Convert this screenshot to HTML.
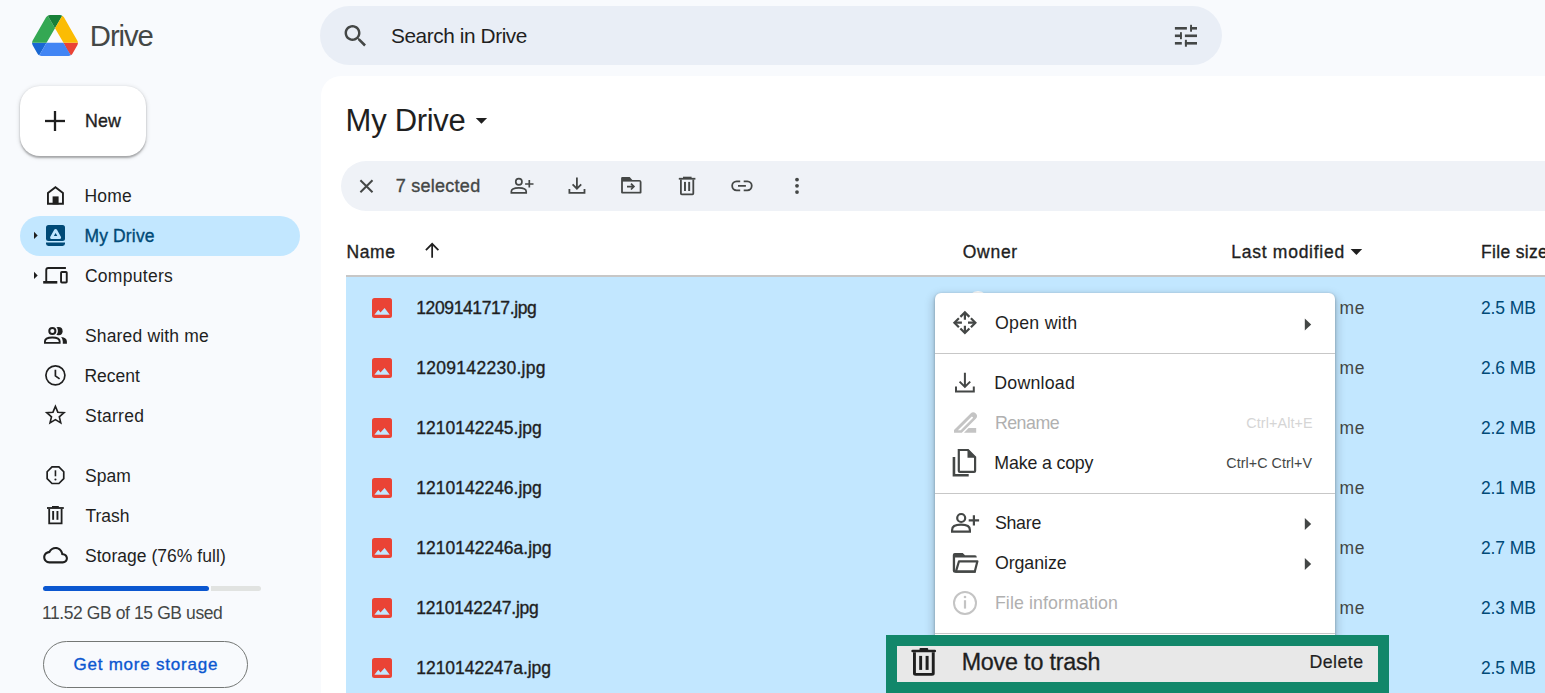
<!DOCTYPE html>
<html><head><meta charset="utf-8">
<style>
*{box-sizing:border-box;margin:0;padding:0}
html,body{width:1545px;height:693px;overflow:hidden;background:#f8fafd;font-family:"Liberation Sans",sans-serif;color:#1f1f1f}
.a{position:absolute}
.t{position:absolute;white-space:nowrap;line-height:1}
svg{position:absolute;left:0;top:0;overflow:visible}
</style></head><body>
<svg style="left:32px;top:15px" width="46" height="41" viewBox="0 0 87.3 78">
<path d="m6.6 66.85 3.85 6.65c.8 1.4 1.95 2.5 3.3 3.3l13.75-23.8h-27.5c0 1.55.4 3.1 1.2 4.5z" fill="#1967d2"/>
<path d="m43.65 25-13.75-23.8c-1.35.8-2.5 1.9-3.3 3.3l-25.4 44a9.06 9.06 0 0 0 -1.2 4.5h27.5z" fill="#34a853"/>
<path d="m73.55 76.8c1.35-.8 2.5-1.9 3.3-3.3l1.6-2.75 7.65-13.25c.8-1.4 1.2-2.95 1.2-4.5h-27.502l5.852 11.5z" fill="#ea4335"/>
<path d="m43.650 25 13.75-23.8c-1.35-.8-2.9-1.2-4.5-1.2h-18.5c-1.6 0-3.15.45-4.5 1.2z" fill="#188038"/>
<path d="m59.8 53h-32.3l-13.75 23.8c1.35.8 2.9 1.2 4.5 1.2h50.8c1.6 0 3.15-.45 4.5-1.2z" fill="#4285f4"/>
<path d="m73.4 26.5-12.7-22c-.8-1.4-1.95-2.5-3.3-3.3l-13.75 23.8 16.15 28h27.45c0-1.55-.4-3.1-1.2-4.5z" fill="#fbbc04"/>
</svg>
<div class="t" style="left:89.86px;top:21.30px;font-size:29.30px;color:#444746;letter-spacing:-1.102px;">Drive</div>
<div class="a" style="left:320px;top:6px;width:902px;height:59px;border-radius:29.5px;background:#e9eef6"></div>
<div class="t" style="left:390.96px;top:25.79px;font-size:20.80px;color:#1f1f1f;letter-spacing:-0.407px;">Search in Drive</div>
<div class="a" style="left:321px;top:76px;width:1300px;height:700px;border-radius:20px 0 0 0;background:#fff"></div>
<div class="a" style="left:20px;top:86px;width:126px;height:70px;border-radius:20px;background:#fff;box-shadow:0 1.5px 2px rgba(0,0,0,.28),0 1px 4px 1px rgba(0,0,0,.1)"></div>
<div class="t" style="left:85.08px;top:113.03px;font-size:17.80px;color:#1f1f1f;-webkit-text-stroke:0.35px #1f1f1f;letter-spacing:0.117px;">New</div>
<div class="a" style="left:20px;top:216px;width:280px;height:40px;border-radius:20px;background:#c2e7ff"></div>
<div class="t" style="left:84.40px;top:187.84px;font-size:17.50px;color:#1f1f1f;letter-spacing:0.250px;">Home</div>
<div class="t" style="left:84.40px;top:227.99px;font-size:17.50px;color:#004a77;-webkit-text-stroke:0.35px #004a77;letter-spacing:0.164px;">My Drive</div>
<div class="t" style="left:84.92px;top:267.79px;font-size:17.50px;color:#1f1f1f;letter-spacing:0.289px;">Computers</div>
<div class="t" style="left:85.01px;top:327.79px;font-size:17.50px;color:#1f1f1f;letter-spacing:0.157px;">Shared with me</div>
<div class="t" style="left:84.40px;top:367.79px;font-size:17.50px;color:#1f1f1f;letter-spacing:0.020px;">Recent</div>
<div class="t" style="left:85.01px;top:407.79px;font-size:17.50px;color:#1f1f1f;letter-spacing:0.254px;">Starred</div>
<div class="t" style="left:85.01px;top:467.79px;font-size:17.50px;color:#1f1f1f;">Spam</div>
<div class="t" style="left:85.45px;top:507.79px;font-size:17.50px;color:#1f1f1f;">Trash</div>
<div class="t" style="left:85.01px;top:547.99px;font-size:17.50px;color:#1f1f1f;letter-spacing:0.038px;">Storage (76% full)</div>
<div class="a" style="left:210.6px;top:586px;width:50.4px;height:5px;border-radius:0 3px 3px 0;background:#e1e3e1"></div>
<div class="a" style="left:43px;top:586px;width:166px;height:5px;border-radius:3px;background:#0b57d0"></div>
<div class="t" style="left:41.89px;top:604.99px;font-size:17.50px;color:#444746;letter-spacing:-0.400px;">11.52 GB of 15 GB used</div>
<div class="a" style="left:43px;top:641px;width:205px;height:47px;border-radius:24px;border:1px solid #747775"></div>
<div class="t" style="left:73.45px;top:655.91px;font-size:17.00px;color:#0b57d0;-webkit-text-stroke:0.35px #0b57d0;letter-spacing:0.777px;">Get more storage</div>
<div class="t" style="left:345.62px;top:105.46px;font-size:31.00px;color:#1f1f1f;letter-spacing:-0.303px;">My Drive</div>
<div class="a" style="left:341px;top:161px;width:1300px;height:50px;border-radius:25px;background:#eff2f7"></div>
<div class="t" style="left:395.70px;top:176.86px;font-size:18.00px;color:#444746;-webkit-text-stroke:0.35px #444746;letter-spacing:0.266px;">7 selected</div>
<div class="t" style="left:346.40px;top:243.89px;font-size:17.50px;color:#1f1f1f;-webkit-text-stroke:0.35px #1f1f1f;letter-spacing:0.617px;">Name</div>
<div class="t" style="left:962.81px;top:243.89px;font-size:17.50px;color:#1f1f1f;-webkit-text-stroke:0.35px #1f1f1f;letter-spacing:0.700px;">Owner</div>
<div class="t" style="left:1231.20px;top:243.89px;font-size:17.50px;color:#1f1f1f;-webkit-text-stroke:0.35px #1f1f1f;letter-spacing:0.742px;">Last modified</div>
<div class="t" style="left:1481.10px;top:243.89px;font-size:17.50px;color:#1f1f1f;-webkit-text-stroke:0.35px #1f1f1f;letter-spacing:0.300px;">File size</div>
<div class="a" style="left:346px;top:275px;width:1300px;height:2px;background:#c7c7c7"></div>
<div class="a" style="left:346px;top:277px;width:1300px;height:420px;background:#c2e7ff"></div>
<div class="t" style="left:416.29px;top:299.79px;font-size:17.50px;color:#1f1f1f;-webkit-text-stroke:0.35px #1f1f1f;letter-spacing:-0.393px;">1209141717.jpg</div>
<div class="t" style="left:1339.56px;top:299.79px;font-size:17.50px;color:#444746;letter-spacing:0.700px;">me</div>
<div class="t" style="left:1480.92px;top:299.79px;font-size:17.50px;color:#004a77;letter-spacing:-0.087px;">2.5 MB</div>
<div class="t" style="left:416.29px;top:359.79px;font-size:17.50px;color:#1f1f1f;-webkit-text-stroke:0.35px #1f1f1f;letter-spacing:0.284px;">1209142230.jpg</div>
<div class="t" style="left:1339.56px;top:359.79px;font-size:17.50px;color:#444746;letter-spacing:0.700px;">me</div>
<div class="t" style="left:1480.92px;top:359.79px;font-size:17.50px;color:#004a77;letter-spacing:-0.087px;">2.6 MB</div>
<div class="t" style="left:416.29px;top:419.79px;font-size:17.50px;color:#1f1f1f;-webkit-text-stroke:0.35px #1f1f1f;letter-spacing:-0.001px;">1210142245.jpg</div>
<div class="t" style="left:1339.56px;top:419.79px;font-size:17.50px;color:#444746;letter-spacing:0.700px;">me</div>
<div class="t" style="left:1480.92px;top:419.79px;font-size:17.50px;color:#004a77;letter-spacing:-0.087px;">2.2 MB</div>
<div class="t" style="left:416.29px;top:479.79px;font-size:17.50px;color:#1f1f1f;-webkit-text-stroke:0.35px #1f1f1f;letter-spacing:-0.001px;">1210142246.jpg</div>
<div class="t" style="left:1339.56px;top:479.79px;font-size:17.50px;color:#444746;letter-spacing:0.700px;">me</div>
<div class="t" style="left:1480.92px;top:479.79px;font-size:17.50px;color:#004a77;letter-spacing:-0.087px;">2.1 MB</div>
<div class="t" style="left:416.29px;top:539.79px;font-size:17.50px;color:#1f1f1f;-webkit-text-stroke:0.35px #1f1f1f;letter-spacing:-0.002px;">1210142246a.jpg</div>
<div class="t" style="left:1339.56px;top:539.79px;font-size:17.50px;color:#444746;letter-spacing:0.700px;">me</div>
<div class="t" style="left:1480.92px;top:539.79px;font-size:17.50px;color:#004a77;letter-spacing:-0.087px;">2.7 MB</div>
<div class="t" style="left:416.29px;top:599.79px;font-size:17.50px;color:#1f1f1f;-webkit-text-stroke:0.35px #1f1f1f;letter-spacing:-0.232px;">1210142247.jpg</div>
<div class="t" style="left:1339.56px;top:599.79px;font-size:17.50px;color:#444746;letter-spacing:0.700px;">me</div>
<div class="t" style="left:1480.92px;top:599.79px;font-size:17.50px;color:#004a77;letter-spacing:-0.087px;">2.3 MB</div>
<div class="t" style="left:416.29px;top:659.79px;font-size:17.50px;color:#1f1f1f;-webkit-text-stroke:0.35px #1f1f1f;letter-spacing:-0.037px;">1210142247a.jpg</div>
<div class="t" style="left:1339.56px;top:659.79px;font-size:17.50px;color:#444746;letter-spacing:0.700px;">me</div>
<div class="t" style="left:1480.92px;top:659.79px;font-size:17.50px;color:#004a77;letter-spacing:-0.087px;">2.5 MB</div>
<svg width="1545" height="693" viewBox="0 0 1545 693" fill="none" stroke-linecap="butt"><g transform="translate(340.9,21.3) scale(1.224)" fill="#444746"><path d="M15.5 14h-.79l-.28-.27C15.41 12.59 16 11.11 16 9.5 16 5.91 13.09 3 9.5 3S3 5.910 3 9.5 5.91 16 9.5 16c1.61 0 3.09-.59 4.23-1.57l.27.28v.79l5 4.99L20.49 19l-4.99-5zm-6 0C7.01 14 5 11.99 5 9.5S7.01 5 9.5 5 14 7.01 14 9.5 11.99 14 9.5 14z"/></g><rect x="1174.9" y="27" width="12" height="2.6" fill="#444746"/><rect x="1190.1" y="27" width="6.9" height="2.6" fill="#444746"/><rect x="1190.1" y="24.8" width="1.9" height="6.9" fill="#444746"/><rect x="1174.9" y="34.5" width="6.8" height="2.6" fill="#444746"/><rect x="1180" y="32.2" width="1.9" height="7" fill="#444746"/><rect x="1184.9" y="34.5" width="12.1" height="2.6" fill="#444746"/><rect x="1174.9" y="42" width="6.9" height="2.6" fill="#444746"/><rect x="1184.9" y="39.8" width="2" height="6.9" fill="#444746"/><rect x="1184.9" y="42" width="12.1" height="2.6" fill="#444746"/><rect x="45" y="119.85" width="20" height="2.3" fill="#1f1f1f"/><rect x="53.85" y="111" width="2.3" height="20" fill="#1f1f1f"/><path d="M47.95 203.75V192.9L55.45 187.2L62.95 192.9V203.75Z" fill="none" stroke="#1f1f1f" stroke-width="1.9" /><rect x="52.6" y="196.4" width="6" height="8" fill="#1f1f1f"/><rect x="46" y="225" width="19" height="16" rx="2.5" fill="#004a77"/><path d="M46 242.6H65V243.6Q65 246 62.6 246H48.4Q46 246 46 243.6Z" fill="#004a77" /><path d="M55.6 230.6L51.7 237.5H59.5Z" fill="#c2e7ff" stroke="#c2e7ff" stroke-width="3.2" stroke-linejoin="round"/><path d="M55.6 233L53.9 235.9H57.3Z" fill="#004a77" /><path d="M34 231.8L37.7 235.4L34 239Z" fill="#1f1f1f"/><path d="M34 271.8L37.7 275.4L34 279Z" fill="#1f1f1f"/><path d="M46.25 281V270Q46.25 267.95 48.3 267.95H65.9" fill="none" stroke="#1f1f1f" stroke-width="1.9" /><rect x="43.2" y="281" width="14.1" height="2.6" fill="#1f1f1f"/><rect x="61.05" y="272.05" width="5.7" height="10.5" rx="0.8" fill="none" stroke="#1f1f1f" stroke-width="1.9"/><circle cx="52.35" cy="331.05" r="3.05" fill="none" stroke="#1f1f1f" stroke-width="2"/><path d="M44.95 342.85V341.3Q44.95 337.45 52.3 337.45Q59.65 337.45 59.65 341.3V342.85Z" fill="none" stroke="#1f1f1f" stroke-width="1.9" /><defs><mask id="cr"><rect x="40" y="320" width="40" height="30" fill="#fff"/><circle cx="52.35" cy="331.05" r="5.6" fill="#000"/></mask></defs><circle cx="58.5" cy="331.15" r="4.1" fill="#1f1f1f" mask="url(#cr)"/><path d="M61.2 337.1Q66.9 337.9 66.9 341.6V343.8H62.8V341.6Q62.8 339.3 61.2 337.1Z" fill="#1f1f1f" /><circle cx="55.4" cy="375.35" r="9.5" fill="none" stroke="#1f1f1f" stroke-width="1.7"/><path d="M55.4 369.8V375.9L59.6 378.9" fill="none" stroke="#1f1f1f" stroke-width="1.7" /><polygon points="55.40,406.40 57.81,412.18 64.05,412.69 59.30,416.77 60.75,422.86 55.40,419.60 50.05,422.86 51.50,416.77 46.75,412.69 52.99,412.18" fill="none" stroke="#1f1f1f" stroke-width="1.6" stroke-linejoin="miter"/><polygon points="63.75,478.64 58.89,483.50 52.01,483.50 47.15,478.64 47.15,471.76 52.01,466.90 58.89,466.90 63.75,471.76" fill="none" stroke="#1f1f1f" stroke-width="1.7"/><path d="M55.45 470.3V476.3" fill="none" stroke="#1f1f1f" stroke-width="1.6" /><circle cx="55.45" cy="479.5" r="1.05" fill="#1f1f1f"/><rect x="47" y="507.1" width="16.8" height="1.8" fill="#1f1f1f"/><rect x="52" y="506" width="6.8" height="1.6" fill="#1f1f1f"/><path d="M49.2 508.9V523.4H61.6V508.9" fill="none" stroke="#1f1f1f" stroke-width="1.8" /><rect x="52.2" y="511" width="1.9" height="8.8" fill="#1f1f1f"/><rect x="56.5" y="511" width="1.9" height="8.8" fill="#1f1f1f"/><g transform="translate(43.2,542.8) scale(1.03)" fill="#1f1f1f"><path d="M12 6c2.62 0 4.88 1.86 5.39 4.43l.3 1.5 1.53.11c1.56.1 2.78 1.41 2.78 2.96 0 1.65-1.35 3-3 3H6c-2.21 0-4-1.79-4-4 0-2.05 1.53-3.76 3.56-3.97l1.07-.11.5-.95C8.08 7.14 9.94 6 12 6m0-2C9.11 4 6.6 5.64 5.35 8.04 2.34 8.36 0 10.91 0 14c0 3.31 2.69 6 6 6h13c2.76 0 5-2.24 5-5 0-2.64-2.05-4.78-4.65-4.96C18.670 6.59 15.64 4 12 4z"/></g><path d="M360.4 180.3L372.5 192.3M372.5 180.3L360.4 192.3" fill="none" stroke="#444746" stroke-width="2" /><circle cx="518.85" cy="181.75" r="3.1" fill="none" stroke="#444746" stroke-width="1.7"/><path d="M511.35 192.95V191.6Q511.35 187.95 518.8 187.95Q526.2 187.95 526.2 191.6V192.95Z" fill="none" stroke="#444746" stroke-width="1.7" /><path d="M525.1 184H533.5M529.3 179.9V187.4" fill="none" stroke="#444746" stroke-width="1.7" /><path d="M576.9 177.5V188.5M572.6 184.4L576.9 188.7L581.2 184.4" fill="none" stroke="#444746" stroke-width="1.8" /><path d="M569.4 188.9V192.9H584.5V188.9" fill="none" stroke="#444746" stroke-width="1.8" /><path d="M621.1 178.2Q621.1 177 622.3 177H629.7L632.3 179.9H639.3Q641.5 179.9 641.5 182V192.5Q641.5 193.6 640.4 193.6H622.2Q621.1 193.6 621.1 192.5Z" fill="#444746" /><rect x="622.9" y="181.6" width="16.8" height="10.2" fill="#eff2f7"/><path d="M627 186.6H633.8M631 183.7L633.9 186.6L631 189.5" fill="none" stroke="#444746" stroke-width="1.7" /><path d="M678.8 178.75H695.4" fill="none" stroke="#444746" stroke-width="1.8" /><rect x="683" y="176.7" width="8.6" height="1.8" fill="#444746"/><path d="M680.9 179.6V193.4Q680.9 194.3 681.8 194.3H692.4Q693.3 194.3 693.3 193.4V179.6" fill="none" stroke="#444746" stroke-width="1.8" /><rect x="684" y="181.9" width="1.95" height="9.1" fill="#444746"/><rect x="688.2" y="181.9" width="1.95" height="9.1" fill="#444746"/><path d="M740.2 181.4H736.6A4.45 4.45 0 0 0 736.6 190.3H740.2M743.7 181.4H747.3A4.45 4.45 0 0 1 747.3 190.3H743.7M738 185.85H745.9" fill="none" stroke="#444746" stroke-width="1.8" /><circle cx="797" cy="179.6" r="1.9" fill="#444746"/><circle cx="797" cy="185.85" r="1.9" fill="#444746"/><circle cx="797" cy="192.1" r="1.9" fill="#444746"/><path d="M475.8 118H487.1L481.45 123.8Z" fill="#1f1f1f"/><path d="M1350.6 249H1362.2L1356.4 254.9Z" fill="#1f1f1f"/><path d="M432.15 244.2V257.7M425.9 250.1L432.15 243.85L438.4 250.1" fill="none" stroke="#1f1f1f" stroke-width="1.75" /><rect x="372" y="298" width="20" height="20" rx="2.5" fill="#ea4335"/><path d="M374.4 314.8L378.3 309.8L380.5 312.6L384.6 307.9L389.7 314.8Z" fill="#c2e7ff"/><rect x="372" y="358" width="20" height="20" rx="2.5" fill="#ea4335"/><path d="M374.4 374.8L378.3 369.8L380.5 372.6L384.6 367.9L389.7 374.8Z" fill="#c2e7ff"/><rect x="372" y="418" width="20" height="20" rx="2.5" fill="#ea4335"/><path d="M374.4 434.8L378.3 429.8L380.5 432.6L384.6 427.9L389.7 434.8Z" fill="#c2e7ff"/><rect x="372" y="478" width="20" height="20" rx="2.5" fill="#ea4335"/><path d="M374.4 494.8L378.3 489.8L380.5 492.6L384.6 487.9L389.7 494.8Z" fill="#c2e7ff"/><rect x="372" y="538" width="20" height="20" rx="2.5" fill="#ea4335"/><path d="M374.4 554.8L378.3 549.8L380.5 552.6L384.6 547.9L389.7 554.8Z" fill="#c2e7ff"/><rect x="372" y="598" width="20" height="20" rx="2.5" fill="#ea4335"/><path d="M374.4 614.8L378.3 609.8L380.5 612.6L384.6 607.9L389.7 614.8Z" fill="#c2e7ff"/><rect x="372" y="658" width="20" height="20" rx="2.5" fill="#ea4335"/><path d="M374.4 674.8L378.3 669.8L380.5 672.6L384.6 667.9L389.7 674.8Z" fill="#c2e7ff"/></svg>
<div class="a" style="left:968px;top:291.3px;width:20px;height:20px;border-radius:50%;background:#fff"></div>
<div class="a" style="left:935px;top:293px;width:400px;height:420px;border-radius:6px;background:#fff;box-shadow:0 4px 8px 3px rgba(0,0,0,.15),0 1px 3px rgba(0,0,0,.3)"></div>
<div class="a" style="left:935px;top:352.5px;width:400px;height:1px;background:#c7c7c7"></div>
<div class="a" style="left:935px;top:492.5px;width:400px;height:1px;background:#c7c7c7"></div>
<div class="a" style="left:935px;top:632.5px;width:400px;height:1px;background:#c7c7c7"></div>
<div class="t" style="left:994.90px;top:314.63px;font-size:17.80px;color:#1f1f1f;letter-spacing:0.270px;">Open with</div>
<div class="t" style="left:994.28px;top:374.73px;font-size:17.80px;color:#1f1f1f;letter-spacing:0.209px;">Download</div>
<div class="t" style="left:994.88px;top:414.73px;font-size:17.80px;color:#b0b0b0;letter-spacing:-0.492px;">Rename</div>
<div class="t" style="left:994.28px;top:454.73px;font-size:17.80px;color:#1f1f1f;letter-spacing:-0.160px;">Make a copy</div>
<div class="t" style="left:994.90px;top:514.73px;font-size:17.80px;color:#1f1f1f;letter-spacing:-0.259px;">Share</div>
<div class="t" style="left:994.90px;top:554.63px;font-size:17.80px;color:#1f1f1f;letter-spacing:-0.054px;">Organize</div>
<div class="t" style="left:994.88px;top:594.53px;font-size:17.80px;color:#b0b0b0;letter-spacing:0.101px;">File information</div>
<div class="t" style="left:1246.29px;top:416.40px;font-size:14.30px;color:#d5d5d5;letter-spacing:0.128px;">Ctrl+Alt+E</div>
<div class="t" style="left:1226.29px;top:456.30px;font-size:14.30px;color:#444746;letter-spacing:0.064px;">Ctrl+C Ctrl+V</div>
<svg width="1545" height="693" viewBox="0 0 1545 693" fill="none"><path d="M960.4 316.9L964.9 312.4L969.4 316.9M960.4 328.5L964.9 333L969.4 328.5M958.9 318.2L954.4 322.7L958.9 327.2M970.9 318.2L975.4 322.7L970.9 327.2" fill="none" stroke="#444746" stroke-width="2.2" stroke-linejoin="miter"/><path d="M964.9 313V319.7M964.9 325.7V332.4M955 322.7H961.9M968 322.7H974.8" fill="none" stroke="#444746" stroke-width="2.2" /><path d="M964.9 372.8V386.5M959.6 381.6L964.9 386.9L970.2 381.6" fill="none" stroke="#444746" stroke-width="2" /><path d="M956 386.6V391.6H973.8V386.6" fill="none" stroke="#444746" stroke-width="2" /><path d="M954 432.7V430.1L970.6 413.5A3.6 3.6 0 0 1 975.8 418.7L961.8 432.7Z" fill="#c4c4c4"/><path d="M957.9 430.3L971.3 416.9Q971.9 416.3 972.5 416.9L972.7 417.1Q973.3 417.7 972.7 418.3L960.7 430.3Z" fill="#fff"/><path d="M964 432.7L968.6 428H976.2V432.7Z" fill="#c4c4c4"/><path d="M958.8 450H968L975.1 457.1V470.9Q975.1 471.9 974.1 471.9H959.8Q958.8 471.9 958.8 470.9Z" fill="none" stroke="#444746" stroke-width="2.2" /><path d="M967.5 449L976.2 457.7H967.5Z" fill="#444746" /><path d="M953.95 457V475.25H968.7" fill="none" stroke="#444746" stroke-width="2.6" /><circle cx="961.2" cy="518" r="4" fill="none" stroke="#444746" stroke-width="2.2"/><path d="M952.1 531.6V529.9Q952.1 524.6 961 524.6Q969.9 524.6 969.9 529.9V531.6Z" fill="none" stroke="#444746" stroke-width="2.2" /><path d="M968.7 520.3H979.1M973.9 515.2V525.4" fill="none" stroke="#444746" stroke-width="2.2" /><path d="M952.8 555.1Q952.8 553.1 954.8 553.1H962.7L965 555.35H975Q976.8 555.35 976.8 557.4H955.1V570.5H975.8V572.8H954.8Q952.8 572.8 952.8 570.8Z" fill="#444746" /><path d="M959 561.3H977.4L974.8 571.6H955.9Z" fill="none" stroke="#444746" stroke-width="2.2" stroke-linejoin="round"/><circle cx="965" cy="603" r="11" fill="none" stroke="#c4c4c4" stroke-width="2"/><path d="M965 600.2V608.6" fill="none" stroke="#c4c4c4" stroke-width="2.2" /><circle cx="965" cy="597" r="1.3" fill="#c4c4c4"/><path d="M1304.8 318.6L1311.2 324.5L1304.8 330.4Z" fill="#444746"/><path d="M1304.8 518.1L1311.2 524L1304.8 529.9Z" fill="#444746"/><path d="M1304.8 558.1L1311.2 564L1304.8 569.9Z" fill="#444746"/></svg>
<div class="a" style="left:886px;top:635px;width:503px;height:70px;background:#12876a"></div>
<div class="a" style="left:897px;top:646px;width:481px;height:36px;background:#e8e8e8"></div>
<div class="t" style="left:961.64px;top:651.18px;font-size:23.30px;color:#1f1f1f;letter-spacing:-0.192px;-webkit-text-stroke:0.3px #1f1f1f;">Move to trash</div>
<div class="t" style="left:1309.38px;top:653.73px;font-size:17.80px;color:#1f1f1f;letter-spacing:0.457px;-webkit-text-stroke:0.2px #1f1f1f;">Delete</div>
<svg width="1545" height="693" viewBox="0 0 1545 693" fill="none"><path d="M912.6 651H934.8" fill="none" stroke="#1f1f1f" stroke-width="2.6" stroke-linecap="round"/><rect x="919.5" y="648.1" width="8.7" height="2.5" rx="0.8" fill="#1f1f1f"/><path d="M914.45 652.3V673.6Q914.45 674.35 915.8 674.35H931.9Q933.25 674.35 933.25 673.6V652.3" fill="none" stroke="#1f1f1f" stroke-width="2.9" /><rect x="919.2" y="655.9" width="2.9" height="14" fill="#1f1f1f"/><rect x="925.6" y="655.9" width="3" height="14" fill="#1f1f1f"/></svg>
</body></html>
